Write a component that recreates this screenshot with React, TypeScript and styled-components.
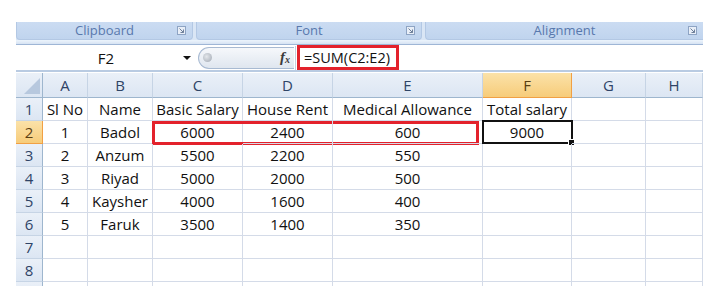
import styled, { createGlobalStyle } from 'styled-components';

const COLS = [27, 45, 65, 90, 90, 150, 89, 74, 57];
const LETTERS = ['A', 'B', 'C', 'D', 'E', 'F', 'G', 'H'];

const ROWS: (string | number)[][] = [
  ['Sl No', 'Name', 'Basic Salary', 'House Rent', 'Medical Allowance', 'Total salary', '', ''],
  [1, 'Badol', 6000, 2400, 600, 9000, '', ''],
  [2, 'Anzum', 5500, 2200, 550, '', '', ''],
  [3, 'Riyad', 5000, 2000, 500, '', '', ''],
  [4, 'Kaysher', 4000, 1600, 400, '', '', ''],
  [5, 'Faruk', 3500, 1400, 350, '', '', ''],
  ['', '', '', '', '', '', '', ''],
  ['', '', '', '', '', '', '', ''],
  ['', '', '', '', '', '', '', ''],
];

const GlobalStyle = createGlobalStyle`
  body {
    margin: 0;
    background: #ffffff;
    font-family: "Open Sans", "Liberation Sans", sans-serif;
  }
`;

function Launcher() {
  return (
    <svg width="9" height="9" viewBox="0 0 9 9">
      <rect x="0.5" y="0.5" width="8" height="8" fill="#e8eef7" stroke="#8ea4c4" />
      <path d="M2.5 2.5 L6.5 6.5 M6.5 3.5 V6.5 H3.5" stroke="#6d7f99" fill="none" />
    </svg>
  );
}

export default function App() {
  const total = (n: number) => COLS.slice(0, n).reduce((a, b) => a + b, 0);

  return (
    <>
      <GlobalStyle />
      <Window>
        <Ribbon>
          <Group $width={177}>
            <span>Clipboard</span>
            <LauncherSlot><Launcher /></LauncherSlot>
          </Group>
          <Group $width={226}>
            <span>Font</span>
            <LauncherSlot><Launcher /></LauncherSlot>
          </Group>
          <Group $width={290}>
            <span>Alignment</span>
            <LauncherSlot><Launcher /></LauncherSlot>
          </Group>
        </Ribbon>
        <RibbonEdge />

        <FormulaBar>
          <NameBox>
            <span>F2</span>
            <DropArrow />
          </NameBox>
          <Pill>
            <Knob />
            <Fx>f<sub>x</sub></Fx>
          </Pill>
          <Divider />
          <FormulaInput>
            <Formula>=SUM(C2:E2)</Formula>
          </FormulaInput>
        </FormulaBar>

        <Sheet>
          <Row $header>
            <Corner>
              <svg width="16" height="16" viewBox="0 0 16 16">
                <polygon points="16,0 16,16 0,16" fill="#b7c8de" />
              </svg>
            </Corner>
            {LETTERS.map((l) => (
              <ColHead key={l} $active={l === 'F'}>{l}</ColHead>
            ))}
          </Row>
          {ROWS.map((row, r) => (
            <Row key={r}>
              <RowHead $active={r === 1}>{r < 8 ? r + 1 : ''}</RowHead>
              {row.map((v, c) => (
                <Cell key={c}>
                  {v}
                  {r === 1 && c === 2 && (
                    <RangeMark style={{ width: total(6) - total(3) - 3 }} />
                  )}
                  {r === 1 && c === 5 && (
                    <ActiveCell>
                      <Handle />
                    </ActiveCell>
                  )}
                </Cell>
              ))}
            </Row>
          ))}
        </Sheet>
      </Window>
    </>
  );
}

const Window = styled.div`
  width: 707px;
  height: 300px;
  padding: 22px 4px 0 16px;
  box-sizing: border-box;
  overflow: hidden;
`;

const Ribbon = styled.div`
  display: flex;
  gap: 3px;
  height: 18px;
  background: #dae6f5;
`;

const Group = styled.div<{ $width: number }>`
  position: relative;
  flex: 0 0 ${({ $width }) => $width}px;
  display: flex;
  align-items: center;
  justify-content: center;
  box-sizing: border-box;
  border: 1px solid #b3c8e4;
  border-top: 0;
  border-radius: 0 0 4px 4px;
  background: linear-gradient(#cbdcf2, #c0d4ee);
  color: #5878ad;
  font-size: 13px;
  line-height: 1;

  &:last-child {
    flex: 1;
    border-right: 0;
    border-radius: 0 0 0 4px;
  }
`;

const LauncherSlot = styled.span`
  position: absolute;
  right: 6px;
  top: 4px;
  display: flex;
`;

const RibbonEdge = styled.div`
  height: 5px;
  box-sizing: border-box;
  background: linear-gradient(#e8f0fa, #d6e3f3);
  border-top: 1px solid #e9f2fb;
  border-bottom: 1px solid #9fb6d6;
`;

const FormulaBar = styled.div`
  display: flex;
  align-items: center;
  height: 27px;
  box-sizing: border-box;
  border-bottom: 2px solid #b9cbe2;
`;

const NameBox = styled.div`
  position: relative;
  width: 180px;
  height: 100%;
  display: flex;
  align-items: center;
  justify-content: center;
  font-size: 15px;
  color: #111;
`;

const DropArrow = styled.span`
  position: absolute;
  right: 5px;
  top: 11px;
  width: 0;
  height: 0;
  border-left: 4px solid transparent;
  border-right: 4px solid transparent;
  border-top: 4px solid #111;
`;

const Pill = styled.div`
  margin-left: 2px;
  width: 96px;
  height: 22px;
  box-sizing: border-box;
  display: flex;
  align-items: center;
  justify-content: space-between;
  padding: 0 4px 0 4px;
  border: 1px solid #a8bad2;
  border-right: 0;
  border-radius: 12px 0 0 12px;
  background: linear-gradient(#f6f8fb, #dfe6ef);
`;

const Knob = styled.span`
  width: 9px;
  height: 9px;
  border-radius: 50%;
  background: radial-gradient(circle at 40% 40%, #e4e7eb, #9ea6b1);
`;

const Fx = styled.span`
  font-family: "Liberation Serif", "DejaVu Serif", serif;
  font-style: italic;
  font-weight: bold;
  font-size: 15px;
  color: #3b3b3b;
  line-height: 1;

  sub {
    font-size: 10px;
    vertical-align: -1px;
  }
`;

const Divider = styled.span`
  width: 1px;
  height: 24px;
  background: #c3cfdf;
  margin: 0 1px;
`;

const FormulaInput = styled.div`
  flex: 1;
  height: 100%;
  display: flex;
  align-items: center;
`;

const Formula = styled.div`
  width: 102px;
  height: 25px;
  box-sizing: border-box;
  border: 3px solid #e3222c;
  display: flex;
  align-items: center;
  padding-left: 4px;
  font-size: 14.5px;
  color: #111;
`;

const Sheet = styled.div`
  margin-top: 1px;
  height: 213px;
  overflow: hidden;
`;

const Row = styled.div<{ $header?: boolean }>`
  display: grid;
  grid-template-columns: ${COLS.map((c) => `${c}px`).join(' ')};
  height: ${({ $header }) => ($header ? 25 : 23)}px;
`;

const HeadBase = styled.div<{ $active?: boolean }>`
  display: flex;
  align-items: center;
  justify-content: center;
  box-sizing: border-box;
  font-size: 15px;
  color: ${({ $active }) => ($active ? '#5a3e12' : '#2f4466')};
  background: ${({ $active }) =>
    $active
      ? 'linear-gradient(#fbe2a9, #f7cc7a)'
      : 'linear-gradient(#eaf0f8, #dce6f3)'};
`;

const Corner = styled(HeadBase)`
  justify-content: flex-end;
  align-items: flex-end;
  padding: 0 2px 3px 0;
  border-right: 1px solid #9eb6ce;
  border-bottom: 1px solid #9eb6ce;
`;

const ColHead = styled(HeadBase)`
  border-right: 1px solid ${({ $active }) => ($active ? '#f1a044' : '#c6d4e5')};
  border-bottom: 1px solid ${({ $active }) => ($active ? '#f1a044' : '#9eb6ce')};
`;

const RowHead = styled(HeadBase)`
  border-right: 1px solid ${({ $active }) => ($active ? '#f1a044' : '#9eb6ce')};
  border-bottom: 1px solid ${({ $active }) => ($active ? '#f1a044' : '#c6d4e5')};
`;

const Cell = styled.div`
  position: relative;
  display: flex;
  align-items: center;
  justify-content: center;
  box-sizing: border-box;
  border-right: 1px solid #d4dbe8;
  border-bottom: 1px solid #d4dbe8;
  font-size: 15px;
  color: #111;
  white-space: nowrap;
`;

const RangeMark = styled.span`
  position: absolute;
  left: -1px;
  top: 0px;
  height: 24px;
  box-sizing: border-box;
  border: 3px solid #e3222c;
  pointer-events: none;
`;

const ActiveCell = styled.span`
  position: absolute;
  left: -1px;
  top: -1px;
  right: -2px;
  bottom: -1px;
  border: 2px solid #111;
`;

const Handle = styled.span`
  position: absolute;
  right: -4px;
  bottom: -4px;
  width: 5px;
  height: 5px;
  background: #111;
  border: 1px solid #fff;
`;
